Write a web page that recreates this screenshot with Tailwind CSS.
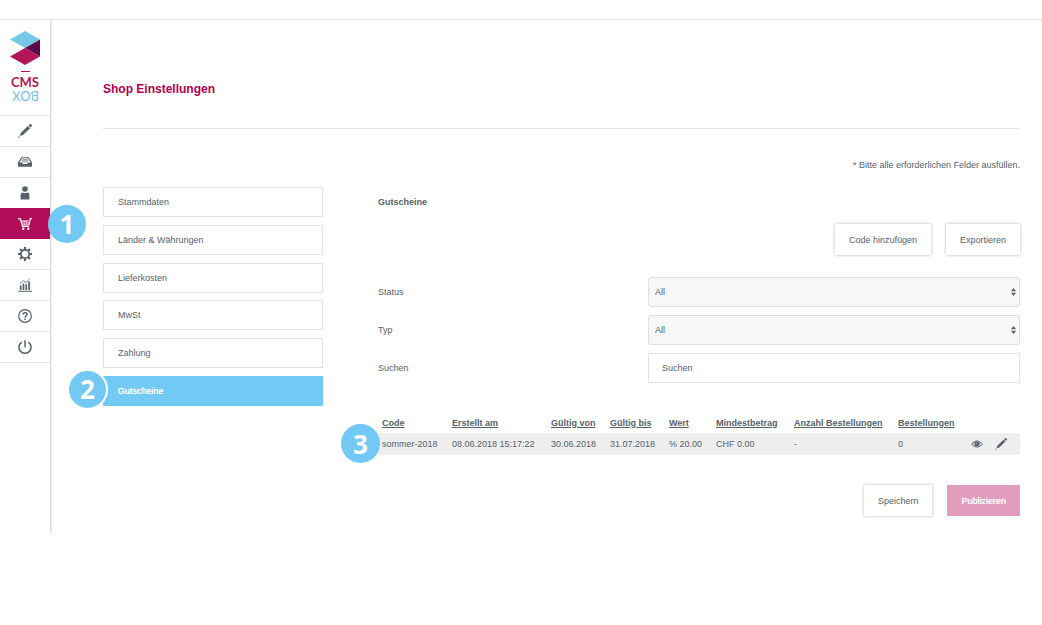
<!DOCTYPE html>
<html lang="de">
<head>
<meta charset="utf-8">
<title>Shop Einstellungen</title>
<script src="https://cdn.jsdelivr.net/npm/@tailwindcss/browser@4"></script>
</head>
<body class="bg-white pt-[19px] font-['Liberation_Sans',Arial,sans-serif] text-[9px] leading-3 text-[#56616b]">
<svg class="hidden" aria-hidden="true">
  <symbol id="pencil" viewBox="0 0 14 14"><path fill="currentColor" d="M10.600 1.200l1-.9q.8-.6 1.400 0l.7.700q.6.800 0 1.400l-.9 1zM9.900 1.900l2.300 2.300-7.300 6.900-3.100 1 .9-3.100zM.2 12.500h1.400v1.200H.2z"/></symbol>
</svg>
<div class="flex items-start border-t border-[#e2e2e2]">
  <aside class="min-h-[514px] w-[50px] shrink-0 shadow-[1px_0_2px_rgba(0,0,0,0.2)] [clip-path:inset(0_-40px_0_0)]">
    <a href="#" aria-label="CMSBOX" class="flex h-24 flex-col items-center border-b border-[#e4e4e4] pt-[10px]">
      <svg class="h-[36px] w-[32px]" viewBox="0 0 32 36"><path fill="#76c8e8" d="M1 9.500L16 1l15 8.500-15 8.500z"/><path fill="#5d0a4c" d="M31 9.500v17L16 18z"/><path fill="#b31658" d="M1 26.500L16 18l15 8.500-15 8.500z"/></svg>
      <span class="mt-[5px] h-px w-[9px] bg-[#b31658]"></span>
      <span class="mt-1 font-['Lato',sans-serif] text-[13px] leading-[13px] font-bold text-[#b31658]">CMS</span>
      <span class="rotate-180 font-['Lato',sans-serif] text-[13px] leading-[13px] font-normal text-[#6cc5e8]">BOX</span>
    </a>
    <nav aria-label="Hauptnavigation">
      <ul class="[&_a]:flex [&_a]:h-full [&_a]:items-center [&_a]:justify-center [&_svg]:size-[14px]">
        <li class="h-[31px] border-b border-[#e4e4e4]"><a href="#" aria-label="Bearbeiten"><svg><use href="#pencil"/></svg></a></li>
        <li class="h-[31px] border-b border-[#e4e4e4]"><a href="#" aria-label="Ablage"><svg viewBox="0 0 14 14"><path fill="currentColor" fill-rule="evenodd" d="M3.300 2.300h7.400L14 7.500v3.500q0 .8-.8.800H.8q-.8 0-.8-.800V7.500zM4 3.300L1.400 7.500H4l1 1.500h4l1-1.500h2.600L10 3.300z"/><path stroke="currentColor" stroke-width=".6" d="M4.200 4.500h5.600M3.600 5.700h6.800M4 6.900h6"/></svg></a></li>
        <li class="h-[31px] border-b border-[#e4e4e4]"><a href="#" aria-label="Benutzer"><svg viewBox="0 0 14 14"><circle cx="7" cy="3" r="2.800" fill="currentColor"/><path fill="currentColor" d="M2.600 13.600V8.600q0-2.100 2-2.100 2.400 1.200 4.800 0 2 0 2 2.100v5z"/></svg></a></li>
        <li class="relative -mt-px h-[31px] bg-[#b10c59] text-white"><a href="#" aria-label="Shop" aria-current="page"><svg viewBox="0 0 14 14"><path fill="none" stroke="currentColor" stroke-width="1.200" d="M0 1.700h2.200l2.300 7.800h6.600M3.200 4h7.300M14 1.700h-1.700L10.900 8H4"/><path stroke="currentColor" stroke-width=".7" opacity=".7" d="M3.500 5.300h7.800M4 6.600h7M6.200 4v4M8.500 4v4"/><circle cx="5.300" cy="11.800" r="1.200" fill="currentColor"/><circle cx="10.300" cy="11.800" r="1.200" fill="currentColor"/></svg></a>
          <span class="absolute top-[-3px] left-[48px] flex size-[38px] items-center justify-center rounded-full bg-[#72c9f3] font-['Noto_Sans',sans-serif] text-[26px] font-bold">1</span></li>
        <li class="h-[31px] border-b border-[#e4e4e4]"><a href="#" aria-label="Einstellungen"><svg viewBox="0 0 14 14"><circle cx="7" cy="7" r="4.200" fill="none" stroke="currentColor" stroke-width="1.700"/><path stroke="currentColor" stroke-width="2.200" d="M7 0v2.500M7 11.500V14M0 7h2.500M11.500 7H14M2.100 2.100l1.700 1.700M10.200 10.200l1.700 1.700M2.100 11.900l1.700-1.700M10.200 3.800l1.700-1.700"/></svg></a></li>
        <li class="h-[31px] border-b border-[#e4e4e4]"><a href="#" aria-label="Statistik"><svg viewBox="0 0 14 14"><path fill="none" stroke="currentColor" stroke-width="1" d="M0 13.300h14"/><path stroke="currentColor" stroke-width="1.700" d="M2.700 12V7.500M5.500 12V5.500M8.300 12V6.300M11.100 12V3.500"/><path fill="none" stroke="currentColor" stroke-width=".8" d="M1.800 5.700l3.500-3 2.700 1.700L11.700.9"/></svg></a></li>
        <li class="h-[31px] border-b border-[#e4e4e4]"><a href="#" aria-label="Hilfe"><svg viewBox="0 0 14 14" fill="none" stroke="currentColor"><circle cx="7" cy="7" r="6.300" stroke-width="1.200"/><path stroke-width="1.400" d="M5 5.600Q5 3.800 7 3.800T9 5.500Q9 6.300 8 6.900T7 8.600M7 9.600v1.400"/></svg></a></li>
        <li class="h-[31px] border-b border-[#e4e4e4]"><a href="#" aria-label="Abmelden"><svg viewBox="0 0 14 14" fill="none" stroke="currentColor" stroke-width="1.500"><path d="M7 .3v7M3.800 2.200a6 6 0 1 0 6.400 0"/></svg></a></li>
      </ul>
    </nav>
  </aside>

  <main class="min-w-0 flex-1 pt-[61px] pr-[22px] pl-[53px]">
    <h1 class="border-b border-[#e4e4e4] pb-[31px] text-xs leading-4 font-bold text-[#b0004f]">Shop Einstellungen</h1>
    <p class="mt-[30px] text-right">* Bitte alle erforderlichen Felder ausfüllen.</p>
    <div class="mt-4 flex items-start gap-[55px]">
      <nav class="w-[220px] shrink-0" aria-label="Shop Einstellungen">
        <ul class="flex h-[219px] flex-col justify-between [&_a]:flex [&_a]:h-[30px] [&_a]:items-center [&_a]:border [&_a]:px-[14px]">
          <li><a href="#" class="border-[#e2e2e2]">Stammdaten</a></li>
          <li><a href="#" class="border-[#e2e2e2]">Länder &amp; Währungen</a></li>
          <li><a href="#" class="border-[#e2e2e2]">Lieferkosten</a></li>
          <li><a href="#" class="border-[#e2e2e2]">MwSt</a></li>
          <li><a href="#" class="border-[#e2e2e2]">Zahlung</a></li>
          <li class="relative"><a href="#" aria-current="page" class="border-[#72c9f3] bg-[#72c9f3] text-white [text-shadow:0_0_1px_#fff]">Gutscheine</a>
            <span class="absolute top-[-7px] left-[-36px] flex size-[41px] items-center justify-center rounded-full border-2 border-white bg-[#72c9f3] font-['Noto_Sans',sans-serif] text-[26px] font-bold text-white">2</span></li>
        </ul>
      </nav>

      <form class="min-w-0 flex-1">
        <h2 class="pt-[9px] font-bold">Gutscheine</h2>
        <div class="mt-4 flex justify-end gap-[15px]">
          <button type="button" class="h-[31px] px-[14px] shadow-[0_0_3px_rgba(0,0,0,0.3)]">Code hinzufügen</button>
          <button type="button" class="h-[31px] px-[14px] shadow-[0_0_3px_rgba(0,0,0,0.3)]">Exportieren</button>
        </div>
        <div class="mt-[22px] grid grid-cols-[270px_1fr] items-center gap-y-2">
          <label for="status">Status</label>
          <div class="relative">
            <select id="status" class="block h-[30px] w-full appearance-none rounded-[3px] border border-[#dedede] bg-[#f7f7f7] px-[6px]"><option>All</option></select>
            <svg class="pointer-events-none absolute top-[11px] right-1 h-2 w-[5px]" viewBox="0 0 5 8" fill="currentColor"><path d="M0 3.300L2.500 0 5 3.300zM0 4.700h5L2.500 8z"/></svg>
          </div>
          <label for="typ">Typ</label>
          <div class="relative">
            <select id="typ" class="block h-[30px] w-full appearance-none rounded-[3px] border border-[#dedede] bg-[#f7f7f7] px-[6px]"><option>All</option></select>
            <svg class="pointer-events-none absolute top-[11px] right-1 h-2 w-[5px]" viewBox="0 0 5 8" fill="currentColor"><path d="M0 3.300L2.500 0 5 3.300zM0 4.700h5L2.500 8z"/></svg>
          </div>
          <label for="suchen">Suchen</label>
          <input id="suchen" type="text" placeholder="Suchen" class="h-[30px] w-full border border-[#e2e2e2] px-[13px] placeholder:text-[#56616b]">
        </div>
        <div class="relative mt-[29px]">
          <table class="w-full table-fixed text-left whitespace-nowrap [&_td]:p-0 [&_td]:pl-1 [&_th]:p-0 [&_th]:pl-1">
            <colgroup><col class="w-[70px]"><col class="w-[99px]"><col class="w-[59px]"><col class="w-[59px]"><col class="w-[47px]"><col class="w-[78px]"><col class="w-[104px]"><col><col class="w-[53px]"></colgroup>
            <thead><tr class="h-[21px]">
              <th><a href="#" class="underline">Code</a></th><th><a href="#" class="underline">Erstellt am</a></th><th><a href="#" class="underline">Gültig von</a></th><th><a href="#" class="underline">Gültig bis</a></th><th><a href="#" class="underline">Wert</a></th><th><a href="#" class="underline">Mindestbetrag</a></th><th><a href="#" class="underline">Anzahl Bestellungen</a></th><th><a href="#" class="underline">Bestellungen</a></th><th aria-label="Aktionen"></th>
            </tr></thead>
            <tbody><tr class="h-[22px] bg-[#eee]">
              <td>sommer-2018</td><td>08.06.2018 15:17:22</td><td>30.06.2018</td><td>31.07.2018</td><td>% 20.00</td><td>CHF 0.00</td><td>-</td><td>0</td>
              <td><div class="flex items-center gap-3">
                <a href="#" aria-label="Ansehen"><svg class="h-2 w-3" viewBox="0 0 12 8"><path fill="none" stroke="currentColor" stroke-width=".9" d="M.4 4.200Q6-2.500 11.600 4.200 6 10 .4 4.200z"/><path fill="none" stroke="currentColor" stroke-width=".6" d="M2 4.200Q6-.3 10 4.200"/><circle cx="6" cy="4" r="2.500" fill="currentColor"/><circle cx="5.200" cy="3.200" r=".5" fill="#eee"/></svg></a>
                <a href="#" aria-label="Bearbeiten"><svg class="size-3"><use href="#pencil"/></svg></a>
              </div></td>
            </tr></tbody>
          </table>
          <span class="absolute bottom-[-8px] left-[-37px] flex size-[39px] items-center justify-center rounded-full bg-[#72c9f3] font-['Noto_Sans',sans-serif] text-[26px] font-bold text-white">3</span>
        </div>
        <div class="mt-[30px] flex justify-end gap-[15px]">
          <button type="button" class="h-[31px] px-[14px] shadow-[0_0_3px_rgba(0,0,0,0.3)]">Speichern</button>
          <button type="submit" class="h-[31px] bg-[#e09dbd] px-[14px] text-white [text-shadow:0_0_1px_#fff]">Publizieren</button>
        </div>
      </form>
    </div>
  </main>
</div>
</body>
</html>
